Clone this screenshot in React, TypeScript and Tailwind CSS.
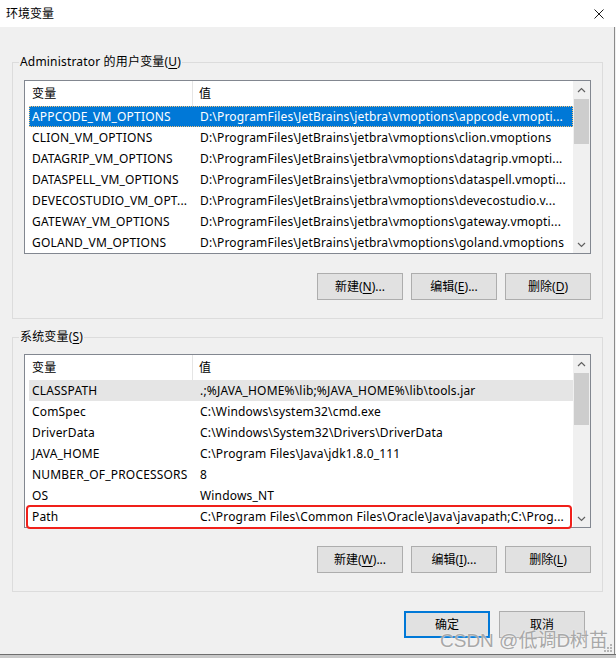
import React from "react";

type Row = { name: string; value: string; state?: "selected" | "hover" | "marked" };

const userVars: Row[] = [
  { name: "APPCODE_VM_OPTIONS", value: "D:\\ProgramFiles\\JetBrains\\jetbra\\vmoptions\\appcode.vmopti...", state: "selected" },
  { name: "CLION_VM_OPTIONS", value: "D:\\ProgramFiles\\JetBrains\\jetbra\\vmoptions\\clion.vmoptions" },
  { name: "DATAGRIP_VM_OPTIONS", value: "D:\\ProgramFiles\\JetBrains\\jetbra\\vmoptions\\datagrip.vmopti..." },
  { name: "DATASPELL_VM_OPTIONS", value: "D:\\ProgramFiles\\JetBrains\\jetbra\\vmoptions\\dataspell.vmopti..." },
  { name: "DEVECOSTUDIO_VM_OPT...", value: "D:\\ProgramFiles\\JetBrains\\jetbra\\vmoptions\\devecostudio.v..." },
  { name: "GATEWAY_VM_OPTIONS", value: "D:\\ProgramFiles\\JetBrains\\jetbra\\vmoptions\\gateway.vmopti..." },
  { name: "GOLAND_VM_OPTIONS", value: "D:\\ProgramFiles\\JetBrains\\jetbra\\vmoptions\\goland.vmoptions" },
];

const systemVars: Row[] = [
  { name: "CLASSPATH", value: ".;%JAVA_HOME%\\lib;%JAVA_HOME%\\lib\\tools.jar", state: "hover" },
  { name: "ComSpec", value: "C:\\Windows\\system32\\cmd.exe" },
  { name: "DriverData", value: "C:\\Windows\\System32\\Drivers\\DriverData" },
  { name: "JAVA_HOME", value: "C:\\Program Files\\Java\\jdk1.8.0_111" },
  { name: "NUMBER_OF_PROCESSORS", value: "8" },
  { name: "OS", value: "Windows_NT" },
  { name: "Path", value: "C:\\Program Files\\Common Files\\Oracle\\Java\\javapath;C:\\Prog...", state: "marked" },
];

function Chevron({ up }: { up?: boolean }) {
  return (
    <svg width="9" height="6" viewBox="0 0 9 6">
      <polyline
        points={up ? "1,5 4.5,1.5 8,5" : "1,1 4.5,4.5 8,1"}
        fill="none"
        stroke="#606060"
        strokeWidth="1.2"
      />
    </svg>
  );
}

function ListView({ rows, thumbHeight }: { rows: Row[]; thumbHeight: number }) {
  return (
    <div className="flex border border-[#828790] bg-white tracking-[0.18px]">
      <div className="flex-1 pl-[4px]">
        <div className="flex h-[25px] items-center">
          <div className="w-[164px] h-full flex items-center pl-[3px] border-r border-[#e5e5e5]">变量</div>
          <div className="pl-[6px]">值</div>
        </div>
        {rows.map((r) => (
          <div
            key={r.name}
            className={
              "relative flex h-[21px] items-center whitespace-nowrap " +
              (r.state === "selected"
                ? "bg-[#0078d7] text-white outline-1 outline-dotted outline-[#f5c37a] -outline-offset-1"
                : r.state === "hover"
                ? "bg-[#e5e5e5]"
                : "")
            }
          >
            <div className="w-[168px] pl-[3px] overflow-hidden">{r.name}</div>
            <div className="flex-1 pl-[3px] overflow-hidden">{r.value}</div>
            {r.state === "marked" && (
              <div className="absolute -top-[1px] -bottom-[2px] -left-[3px] right-[1px] border-2 border-[#f0201a] rounded-[4px]" />
            )}
          </div>
        ))}
      </div>
      <div className="w-[17px] bg-[#f0f0f0] flex flex-col">
        <div className="h-[17px] flex items-center justify-center">
          <Chevron up />
        </div>
        <div className="flex-1 relative">
          <div
            className="absolute top-[1px] left-[1px] right-[1px] bg-[#cdcdcd]"
            style={{ height: thumbHeight }}
          />
        </div>
        <div className="h-[17px] flex items-center justify-center">
          <Chevron />
        </div>
      </div>
    </div>
  );
}

function Btn({ label, keyChar, suffix, primary }: { label: string; keyChar?: string; suffix?: string; primary?: boolean }) {
  return (
    <div
      className={
        "w-[86px] h-[27px] flex items-center justify-center bg-[#e1e1e1] " +
        (primary ? "border-2 border-[#0078d7]" : "border border-[#adadad]")
      }
    >
      {label}
      {keyChar && (
        <>
          (<span className="underline underline-offset-2">{keyChar}</span>)
        </>
      )}
      {suffix}
    </div>
  );
}

function Group({ title, keyChar, children }: { title: string; keyChar: string; children: React.ReactNode }) {
  return (
    <fieldset className="w-[591px] border border-[#dcdcdc] px-[11px] pb-[18px]">
      <legend className="-ml-[5px] px-[1px] h-[16px] leading-[16px] tracking-[0.18px]">
        {title}(<span className="underline underline-offset-2">{keyChar}</span>)
      </legend>
      {children}
    </fieldset>
  );
}

export default function App() {
  return (
    <div
      className="relative w-[616px] h-[658px] overflow-hidden bg-[#f0f0f0] text-[12px] text-black"
      style={{ fontFamily: '"Noto Sans", "Noto Sans CJK SC", sans-serif' }}
    >
      <div className="h-[27px] bg-white flex items-center justify-between pl-[6px] pr-[12px]">
        <span>环境变量</span>
        <svg width="10" height="10" viewBox="0 0 10 10">
          <path d="M0.5 0.5 L9.5 9.5 M9.5 0.5 L0.5 9.5" stroke="#1a1a1a" strokeWidth="1" />
        </svg>
      </div>

      <div className="pl-[12px] pt-[27px] border-r border-[#8a8a8a] w-[615px] h-[627px]">
        <Group title="Administrator 的用户变量" keyChar="U">
          <div className="mt-[10px]">
            <ListView rows={userVars} thumbHeight={45} />
          </div>
          <div className="mt-[19px] flex justify-end gap-[8px]">
            <Btn label="新建" keyChar="N" suffix="..." />
            <Btn label="编辑" keyChar="E" suffix="..." />
            <Btn label="删除" keyChar="D" />
          </div>
        </Group>

        <div className="mt-[10px]">
          <Group title="系统变量" keyChar="S">
            <div className="mt-[9px]">
              <ListView rows={systemVars} thumbHeight={52} />
            </div>
            <div className="mt-[18px] flex justify-end gap-[8px]">
              <Btn label="新建" keyChar="W" suffix="..." />
              <Btn label="编辑" keyChar="I" suffix="..." />
              <Btn label="删除" keyChar="L" />
            </div>
          </Group>
        </div>

        <div className="w-[573px] mt-[19px] flex justify-end gap-[9px]">
          <Btn label="确定" primary />
          <Btn label="取消" />
        </div>
      </div>

      <div className="h-[4px] border-t border-[#6e6e6e] bg-[#c9c9c9]" />

      <div
        className="absolute left-[440px] top-[627px] text-[19px] text-[#a8a8a8] whitespace-nowrap"
        style={{ fontFamily: '"Liberation Sans", "Noto Sans CJK SC", sans-serif', textShadow: "0 0 2px #ffffff" }}
      >
        CSDN @低调D树苗
      </div>

      <svg className="absolute left-[604px] top-[644px]" width="9" height="9" viewBox="0 0 9 9">
        <g fill="#b5b5b5">
          <rect x="6" y="0" width="2" height="2" />
          <rect x="3" y="3" width="2" height="2" />
          <rect x="6" y="3" width="2" height="2" />
          <rect x="0" y="6" width="2" height="2" />
          <rect x="3" y="6" width="2" height="2" />
          <rect x="6" y="6" width="2" height="2" />
        </g>
      </svg>
    </div>
  );
}
